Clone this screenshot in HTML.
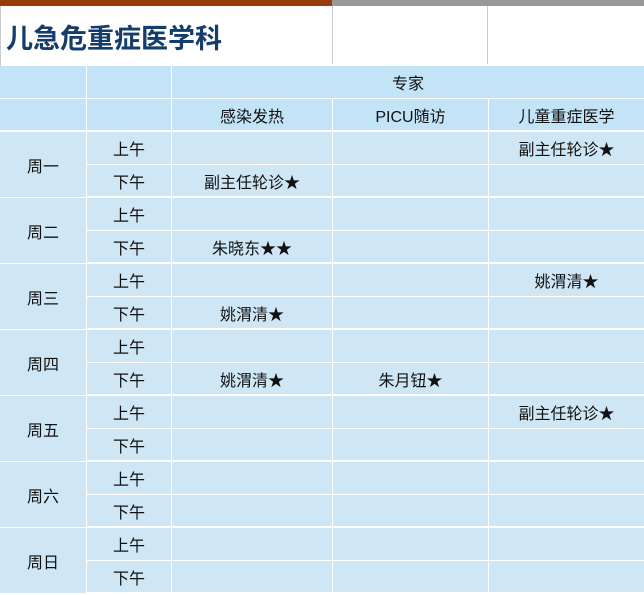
<!DOCTYPE html><html><head><meta charset="utf-8"><style>
body{margin:0;width:644px;height:595px;overflow:hidden;background:#fff;font-family:"Liberation Sans","Noto Sans CJK SC",sans-serif;position:relative}
div{position:absolute;box-sizing:border-box}
.c{display:flex;align-items:center;justify-content:center;font-size:16px;color:#111}
.h{background:#c3e4f7}.b{background:#cfe6f5}
</style></head><body>
<div style="left:0;top:0;width:332px;height:6px;background:#9a3b0c"></div>
<div style="left:332px;top:0;width:312px;height:6px;background:#999"></div>
<div style="left:332px;top:6px;width:1px;height:58px;background:#ccc"></div>
<div style="left:487px;top:6px;width:1px;height:58px;background:#ccc"></div>
<div style="left:0;top:6px;width:1px;height:60px;background:#ccc"></div>
<div style="left:6px;top:17px;font-size:27px;font-weight:bold;color:#153d6b;letter-spacing:0px">儿急危重症医学科</div>
<div id="g" style="left:0;top:66px;width:644px;height:529px;background:#fff"></div>
<script>
var H='',cols=[0,86,171,332,488,644];
function cell(x1,y1,x2,y2,cls,t){H+='<div class="c '+cls+'" style="left:'+(x1+1)+'px;top:'+(y1+1)+'px;width:'+(x2-x1-1)+'px;height:'+(y2-y1-1)+'px">'+(t||'')+'</div>';}
cell(-1,65,86,98,'h');cell(86,65,171,98,'h');cell(171,65,644,98,'h','专家');
cell(-1,98,86,130,'h');cell(86,98,171,130,'h');cell(171,98,332,130,'h','感染发热');cell(332,98,488,130,'h','PICU随访');cell(488,98,644,130,'h','儿童重症医学');
var days=['周一','周二','周三','周四','周五','周六','周日'];
var data={'0a4':'副主任轮诊★','0p2':'副主任轮诊★','1p2':'朱晓东★★','2a4':'姚渭清★','2p2':'姚渭清★','3p2':'姚渭清★','3p3':'朱月钮★','4a4':'副主任轮诊★'};
for(var d=0;d<7;d++){var y=131+66*d;
cell(-1,y,86,y+66,'b',days[d]);
['a','p'].forEach(function(s,i){var yy=y+33*i;cell(86,yy,171,yy+33-(i==0?0:1),'b',i?'下午':'上午');
for(var c=2;c<5;c++)cell(cols[c],yy,cols[c+1],yy+33-(i==0?0:1),'b',data[d+s+c]||'');});}
document.body.insertAdjacentHTML('beforeend',H);
</script>
</body></html>
